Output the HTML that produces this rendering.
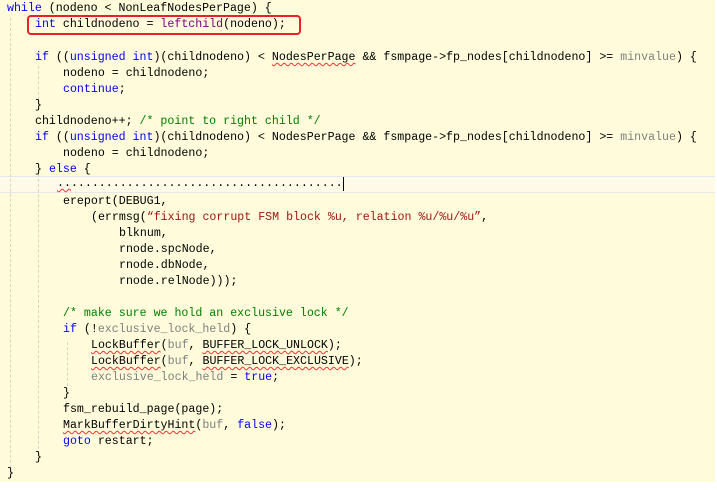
<!DOCTYPE html>
<html><head><meta charset="utf-8"><style>
html,body{margin:0;padding:0;}
body{width:717px;height:490px;background:#fff;position:relative;overflow:hidden;}
#ed{position:absolute;left:0;top:0;width:715px;height:482px;background:#fffbdb;}
.l{position:absolute;left:0;height:16px;line-height:16px;white-space:pre;font-family:"Liberation Mono",monospace;font-size:11.62px;color:#000;margin-top:1px;}
.k{color:#0000ff}.f{color:#800080}.c{color:#008000}.s{color:#a31515}.g{color:#808080}
.w{text-decoration:underline wavy #ff3030;text-decoration-thickness:1px;text-underline-offset:2px;}
.cur{position:absolute;left:0;top:176px;width:715px;height:15px;background:#fffbe8;border-top:1px solid #e6e6ee;border-bottom:1px solid #e6e6ee;}
.gd{position:absolute;width:0;border-left:1px dashed #d8d4c0;}
</style></head><body><div id="ed">
<div class="cur"></div>
<div class="gd" style="left:10px;top:18px;height:460px"></div>
<div class="gd" style="left:38px;top:66px;height:44px"></div>
<div class="gd" style="left:38px;top:164px;height:290px"></div>
<div class="gd" style="left:67px;top:342px;height:44px"></div>
<div style="position:absolute;left:27px;top:15px;width:270px;height:16px;border:2px solid #e8202a;border-radius:4px;"></div>
<div style="position:absolute;left:343px;top:177px;width:1px;height:14px;background:#000"></div>
<div class="l" style="top:0px;left:7px"><span class="k">while</span> (nodeno &lt; NonLeafNodesPerPage) {</div>
<div class="l" style="top:16px;left:35px"><span class="k">int</span> childnodeno = <span class="f">leftchild</span>(nodeno);</div>
<div class="l" style="top:49px;left:35px"><span class="k">if</span> ((<span class="k">unsigned int</span>)(childnodeno) &lt; <span class="w">NodesPerPage</span> &amp;&amp; fsmpage-&gt;fp_nodes[childnodeno] &gt;= <span class="g">minvalue</span>) {</div>
<div class="l" style="top:65px;left:63px">nodeno = childnodeno;</div>
<div class="l" style="top:81px;left:63px"><span class="k">continue</span>;</div>
<div class="l" style="top:97px;left:35px">}</div>
<div class="l" style="top:113px;left:35px">childnodeno++; <span class="c">/* point to right child */</span></div>
<div class="l" style="top:129px;left:35px"><span class="k">if</span> ((<span class="k">unsigned int</span>)(childnodeno) &lt; NodesPerPage &amp;&amp; fsmpage-&gt;fp_nodes[childnodeno] &gt;= <span class="g">minvalue</span>) {</div>
<div class="l" style="top:145px;left:63px">nodeno = childnodeno;</div>
<div class="l" style="top:161px;left:35px">} <span class="k">else</span> {</div>
<div class="l" style="top:175px;left:57px"><span class="w">..</span>.......................................</div>
<div class="l" style="top:193px;left:63px">ereport(DEBUG1,</div>
<div class="l" style="top:209px;left:91px">(errmsg(<span class="s">“fixing corrupt FSM block %u, relation %u/%u/%u”</span>,</div>
<div class="l" style="top:225px;left:119px">blknum,</div>
<div class="l" style="top:241px;left:119px">rnode.spcNode,</div>
<div class="l" style="top:257px;left:119px">rnode.dbNode,</div>
<div class="l" style="top:273px;left:119px">rnode.relNode)));</div>
<div class="l" style="top:305px;left:63px"><span class="c">/* make sure we hold an exclusive lock */</span></div>
<div class="l" style="top:321px;left:63px"><span class="k">if</span> (!<span class="g">exclusive_lock_held</span>) {</div>
<div class="l" style="top:337px;left:91px"><span class="w">LockBuffer</span>(<span class="g">buf</span>, <span class="w">BUFFER_LOCK_UNLOCK</span>);</div>
<div class="l" style="top:353px;left:91px"><span class="w">LockBuffer</span>(<span class="g">buf</span>, <span class="w">BUFFER_LOCK_EXCLUSIVE</span>);</div>
<div class="l" style="top:369px;left:91px"><span class="g">exclusive_lock_held</span> = <span class="k">true</span>;</div>
<div class="l" style="top:385px;left:63px">}</div>
<div class="l" style="top:401px;left:63px">fsm_rebuild_page(page);</div>
<div class="l" style="top:417px;left:63px"><span class="w">MarkBufferDirtyHint</span>(<span class="g">buf</span>, <span class="k">false</span>);</div>
<div class="l" style="top:433px;left:63px"><span class="k">goto</span> restart;</div>
<div class="l" style="top:449px;left:35px">}</div>
<div class="l" style="top:465px;left:7px">}</div>
</div></body></html>
